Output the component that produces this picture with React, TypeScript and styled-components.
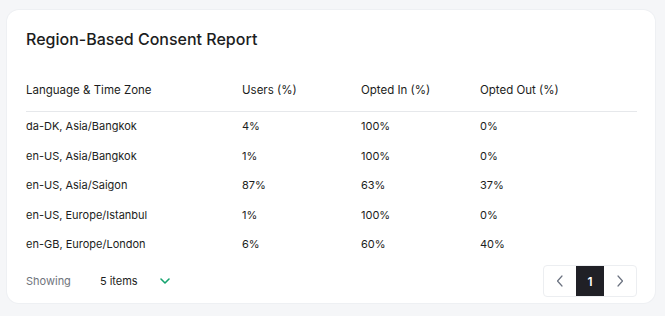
import React from 'react';
import styled, { createGlobalStyle } from 'styled-components';

const rows = [
  { zone: 'da-DK, Asia/Bangkok', users: '4%', optIn: '100%', optOut: '0%' },
  { zone: 'en-US, Asia/Bangkok', users: '1%', optIn: '100%', optOut: '0%' },
  { zone: 'en-US, Asia/Saigon', users: '87%', optIn: '63%', optOut: '37%' },
  { zone: 'en-US, Europe/Istanbul', users: '1%', optIn: '100%', optOut: '0%' },
  { zone: 'en-GB, Europe/London', users: '6%', optIn: '60%', optOut: '40%' },
];

const App: React.FC = () => {
  return (
    <>
      <GlobalStyle />
      <Page>
        <Card>
          <Title>Region-Based Consent Report</Title>
          <Table>
            <HeadRow>
              <Cell>Language &amp; Time Zone</Cell>
              <Cell>Users (%)</Cell>
              <Cell>Opted In (%)</Cell>
              <Cell>Opted Out (%)</Cell>
            </HeadRow>
            {rows.map((row) => (
              <Row key={row.zone}>
                <Cell>{row.zone}</Cell>
                <Cell>{row.users}</Cell>
                <Cell>{row.optIn}</Cell>
                <Cell>{row.optOut}</Cell>
              </Row>
            ))}
          </Table>
          <Footer>
            <PageSize>
              <Muted>Showing</Muted>
              <SizeSelect>
                5 items
                <svg width="12" height="10" viewBox="0 0 12 10" fill="none" stroke="#16a36f" strokeWidth="1.6" strokeLinecap="round" strokeLinejoin="round">
                  <path d="M2 3l4 4 4-4" />
                </svg>
              </SizeSelect>
            </PageSize>
            <Pager>
              <PageButton aria-label="previous">
                <svg width="8" height="12" viewBox="0 0 8 12" fill="none" stroke="#6b7280" strokeWidth="1.2" strokeLinecap="round" strokeLinejoin="round">
                  <path d="M6 1L1.5 6 6 11" />
                </svg>
              </PageButton>
              <PageButton $active>1</PageButton>
              <PageButton aria-label="next">
                <svg width="8" height="12" viewBox="0 0 8 12" fill="none" stroke="#6b7280" strokeWidth="1.2" strokeLinecap="round" strokeLinejoin="round">
                  <path d="M2 1l4.5 5L2 11" />
                </svg>
              </PageButton>
            </Pager>
          </Footer>
        </Card>
      </Page>
    </>
  );
};

const GlobalStyle = createGlobalStyle`
  html, body {
    margin: 0;
    padding: 0;
    background: #f5f6f8;
    font-family: Inter, 'Liberation Sans', sans-serif;
    color: #1c1d21;
  }
`;

const Page = styled.div`
  padding: 10px 10px 13px 7px;
  width: 665px;
  height: 316px;
  box-sizing: border-box;
`;

const Card = styled.div`
  width: 648px;
  height: 293px;
  box-sizing: border-box;
  background: #ffffff;
  border-radius: 12px;
  box-shadow: 0 0 0 1px #eef0f3;
  padding: 18px 18px 0 19px;
  display: flex;
  flex-direction: column;
`;

const Title = styled.h1`
  margin: 0;
  font-size: 16px;
  font-weight: 500;
  line-height: 22px;
`;

const Table = styled.div`
  margin-top: 20px;
  display: flex;
  flex-direction: column;
`;

const grid = `
  display: grid;
  grid-template-columns: 216px 119px 119px 1fr;
  align-items: center;
`;

const HeadRow = styled.div`
  ${grid}
  height: 42px;
  box-sizing: border-box;
  border-bottom: 1px solid #e6e8eb;

  & > div {
    font-size: 11.5px;
  }
`;

const Row = styled.div`
  ${grid}
  height: 29.5px;
`;

const Cell = styled.div`
  font-size: 11px;
  line-height: 15px;
  white-space: nowrap;
`;

const Footer = styled.div`
  display: flex;
  align-items: center;
  justify-content: space-between;
  margin-top: 5.5px;
`;

const PageSize = styled.div`
  display: flex;
  align-items: center;
  gap: 29px;
  font-size: 11px;
`;

const Muted = styled.span`
  color: #70747c;
`;

const SizeSelect = styled.span`
  display: flex;
  align-items: center;
  gap: 21px;
`;

const Pager = styled.div`
  display: flex;
  align-items: stretch;
  height: 32px;
  box-sizing: border-box;
  border: 1px solid #eceef1;
  border-radius: 4px;
  overflow: hidden;
`;

const PageButton = styled.button<{ $active?: boolean }>`
  width: ${(p) => (p.$active ? '28px' : '32px')};
  border: none;
  margin: 0;
  padding: 0;
  display: flex;
  align-items: center;
  justify-content: center;
  font-family: inherit;
  font-size: 12px;
  font-weight: 600;
  background: ${(p) => (p.$active ? '#202026' : 'transparent')};
  color: ${(p) => (p.$active ? '#ffffff' : '#6b7280')};
  cursor: pointer;
`;

export default App;
